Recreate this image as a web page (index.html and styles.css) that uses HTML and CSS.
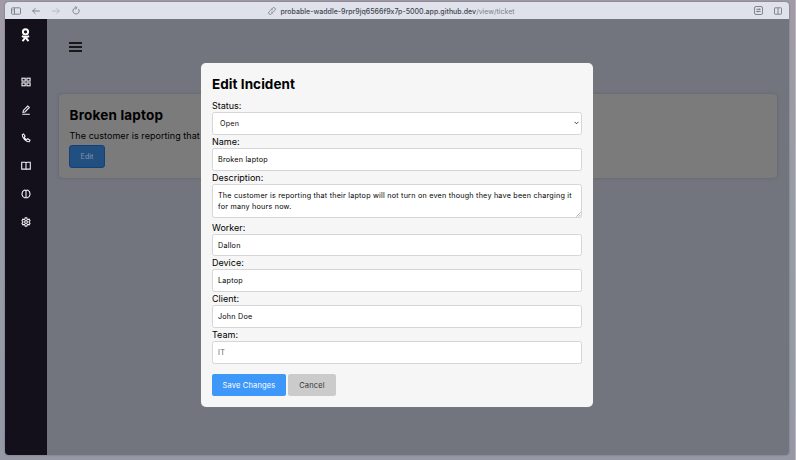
FILE: index.html
```html
<!DOCTYPE html>
<html lang="en">
<head>
<meta charset="utf-8">
<title>Edit Incident</title>
<link rel="stylesheet" href="styles.css">
</head>
<body>
<div class="window">
  <header class="toolbar">
    <div class="tools">
      <svg width="10" height="8" viewBox="0 0 10 8"><rect x=".5" y=".8" width="9" height="6.4" rx="1"/><path d="M3.5 1v6M1.5 2.5h1M1.5 4h1"/></svg>
      <svg width="8" height="8" viewBox="0 0 8 8"><path d="M7.8 4H.7M3.5 1.1L.6 4l2.9 2.9"/></svg>
      <svg class="faint" width="8" height="8" viewBox="0 0 8 8"><path d="M.2 4h7.1M4.5 1.1L7.4 4 4.5 6.9"/></svg>
      <svg width="8" height="9" viewBox="0 0 8 9"><path d="M6.5 3a3.1 3.1 0 1 1-2.5-1.2M3.3.3L5 1.8 3.3 3.5"/></svg>
    </div>
    <div class="address">
      <svg width="8" height="8" viewBox="0 0 8 8"><path d="M3.3 2.3l1.3-1.3a1.6 1.6 0 0 1 2.3 2.3L5.2 5a1.6 1.6 0 0 1-2.1.1M4.7 5.7L3.4 7a1.6 1.6 0 0 1-2.3-2.3L2.8 3a1.6 1.6 0 0 1 2.1-.1"/></svg>
      <span class="host">probable-waddle-9rpr9jq6566f9x7p-5000.app.github.dev</span><span class="path">/view/ticket</span>
    </div>
    <div class="tools right">
      <svg width="9" height="9" viewBox="0 0 9 9"><rect x=".5" y=".5" width="8" height="8" rx="1.5"/><path d="M2.3 3.3h4.4M2.3 5.5h4.4M5.3 2.5v1.6M3.6 4.7v1.6"/></svg>
      <svg width="8" height="8" viewBox="0 0 8 8"><rect x=".5" y=".8" width="7" height="6.4" rx=".6"/><path d="M4 .8v6.4"/></svg>
    </div>
  </header>
  <div class="app">
    <nav class="sidebar">
      <svg class="logo" width="9" height="15" viewBox="0 0 9 15"><circle cx="4.5" cy="3.8" r="2.6"/><path d="M.9 8.1q3.6 1.8 7.2 0M4.5 9.3L1.5 13.1M4.5 9.3l3 3.8"/></svg>
      <svg width="10" height="10" viewBox="0 0 10 10"><rect x="1" y="1.2" width="3.2" height="2.9"/><rect x="5.9" y="1.2" width="3.2" height="2.9"/><rect x="1" y="5.9" width="3.2" height="2.9"/><rect x="5.9" y="5.9" width="3.2" height="2.9"/></svg>
      <svg width="10" height="10" viewBox="0 0 10 10"><path d="M1.2 9.3h7.6M2 7.4l.4-2L6.7 1l1.6 1.5L4 7z"/></svg>
      <svg width="10" height="10" viewBox="0 0 10 10"><path d="M1.3 1.7L2.6.9l1.5 2.3-.9 1q.8 1.7 2.5 2.5l1-.9 2.3 1.4-.8 1.5Q6.5 9.3 3.6 6.7.9 4 1.3 1.7z"/></svg>
      <svg width="10" height="10" viewBox="0 0 10 10"><path d="M5 1.7v6.8M.7 1.3H4L5 1.8l1-.5h3.3v6.8H6l-1 .4-1-.4H.7z"/></svg>
      <svg width="10" height="10" viewBox="0 0 10 10"><path d="M5 .9v8.2M5 1.6Q3.6.5 2.6 1.7 1 2.3 1.3 4q-.7 1.3.1 2.5.2 1.5 1.6 1.8Q4 9.3 5 8.3q1 1 2 0 1.4-.3 1.6-1.8.8-1.2.1-2.5.3-1.7-1.3-2.3Q6.4.5 5 1.6z"/></svg>
      <svg width="10" height="10" viewBox="0 0 10 10"><circle cx="5" cy="5" r="1.4"/><path d="M4.2.8h1.6l.3 1.3.8.5 1.3-.4.8 1.4-.9 1v.8l.9 1-.8 1.4-1.3-.4-.8.5-.3 1.3H4.2l-.3-1.3-.8-.5-1.3.4L1 6.4l.9-1v-.8L1 3.6l.8-1.4 1.3.4.8-.5z"/></svg>
    </nav>
    <main class="page">
      <div class="menu"><i></i><i></i><i></i></div>
      <section class="card">
        <h2>Broken laptop</h2>
        <p>The customer is reporting that</p>
        <span class="edit">Edit</span>
      </section>
    </main>
  </div>
</div>
<form class="modal">
  <h2>Edit Incident</h2>
  <label>Status:</label>
  <div class="field select"><span>Open</span><svg width="5" height="4" viewBox="0 0 5 4"><path d="M.5.8l2 2 2-2"/></svg></div>
  <label>Name:</label>
  <div class="field">Broken laptop</div>
  <label>Description:</label>
  <div class="field area">The customer is reporting that their laptop will not turn on even though they have been charging it<br>for many hours now.<svg class="grip" width="5" height="5" viewBox="0 0 5 5"><path d="M.3 4.7L4.7.3M2.7 4.7l2-2"/></svg></div>
  <label>Worker:</label>
  <div class="field">Dallon</div>
  <label>Device:</label>
  <div class="field">Laptop</div>
  <label>Client:</label>
  <div class="field">John Doe</div>
  <label>Team:</label>
  <div class="field muted">IT</div>
  <div class="actions"><span class="save">Save Changes</span><span class="cancel">Cancel</span></div>
</form>
</body>
</html>
```
FILE: styles.css
```css
* { box-sizing: border-box; }
body {
  margin: 0;
  width: 796px;
  height: 460px;
  overflow: hidden;
  padding: 2px 7px 5px 5px;
  background: linear-gradient(#a19ba5, #969da7 50%, #9699a5);
  border-right: 1px solid #b9b5bd;
  font-family: Inter, sans-serif;
  color: #000;
}
svg { display: block; flex: none; fill: none; stroke: currentColor; stroke-width: .8; }
.window { width: 784px; height: 453px; border-radius: 4px; overflow: hidden; box-shadow: 0 0 2px #666975; }
.toolbar {
  height: 17px;
  background: #dfe2eb;
  display: grid;
  grid-template-columns: 1fr auto 1fr;
  align-items: center;
  color: #6b6d75;
}
.tools { display: flex; align-items: center; padding-left: 6px; gap: 12px; }
.tools svg:first-child { margin-right: -1px; }
.tools .faint { color: #adb0b8; }
.right { justify-content: flex-end; padding: 0 7px 0 0; }
.right svg:first-child { margin-right: -.5px; }
.address { display: flex; align-items: center; font-size: 7px; white-space: nowrap; padding: 1px 11px 0 0; }
.address svg { margin-right: 4px; stroke-width: .7; }
.host { color: #44464d; font-weight: 500; letter-spacing: .01px; }
.path { color: #7c7f87; }
.app { display: flex; height: 436px; }
.sidebar {
  width: 42px;
  background: #13101c;
  color: #f0f0f3;
  display: flex;
  flex-direction: column;
  align-items: center;
  gap: 18px;
  padding: 9px 1px 0 0;
}
.sidebar svg { stroke-width: 1.1; }
.sidebar .logo { color: #fff; stroke-width: 2; margin-bottom: 15.6px; }
.page { flex: 1; background: #72757d; padding: 23px 12px; min-width: 0; }
.menu { margin-left: 10.4px; width: 13px; display: grid; gap: 2px; }
.menu i { height: 2px; background: #17181a; }
.card {
  margin-top: 42px;
  height: 84px;
  border-radius: 4px;
  background: #7b7b7b;
  padding: 10.5px;
  box-shadow: 0 0 3px #5e6067;
}
.card h2, .card p { margin: 0; white-space: nowrap; }
.card h2 { font-size: 13.5px; line-height: 20px; letter-spacing: .2px; }
.card p { font-size: 9px; line-height: 14px; margin-top: 4.5px; letter-spacing: .06px; }
.edit {
  display: flex;
  align-items: center;
  justify-content: center;
  width: 36px;
  height: 23px;
  margin-top: 2px;
  margin-left: -.5px;
  border: 1px solid #173f7c;
  border-radius: 3px;
  background: #204f80;
  color: #8797aa;
  font-size: 7.2px;
}
.modal {
  position: absolute;
  left: 201px;
  top: 63px;
  width: 392px;
  height: 344px;
  border-radius: 5px;
  background: #f6f6f6;
  padding: 11px;
  box-shadow: 0 0 1px #8d8f94;
}
.modal h2 { margin: 0 0 5px; font-size: 13.5px; line-height: 20px; letter-spacing: .06px; }
.modal label { display: block; height: 13.08px; font-size: 9px; line-height: 13px; }
.field {
  height: 22.7px;
  border: 1px solid #d6d6d6;
  border-radius: 2.5px;
  background: #fff;
  font-size: 7.2px;
  line-height: 21px;
  letter-spacing: .224px;
  padding: 0 5px;
  white-space: nowrap;
}
.select { display: flex; align-items: center; justify-content: space-between; padding: 0 2px 0 7px; color: #111; }
.area { position: relative; height: 34px; padding-top: 5px; line-height: 11px; margin-bottom: 2.9px; }
.grip { position: absolute; right: 0; bottom: 0; color: #777; stroke-width: .6; }
.muted { color: #666; }
.actions { display: flex; gap: 2px; margin-top: 10.7px; font-size: 7.5px; letter-spacing: .17px; }
.save, .cancel { height: 22px; border-radius: 2px; display: flex; align-items: center; justify-content: center; }
.save { width: 74px; background: #3e98fa; color: #fff; }
.cancel { width: 48px; background: #cbcbcb; color: #333; }
```
